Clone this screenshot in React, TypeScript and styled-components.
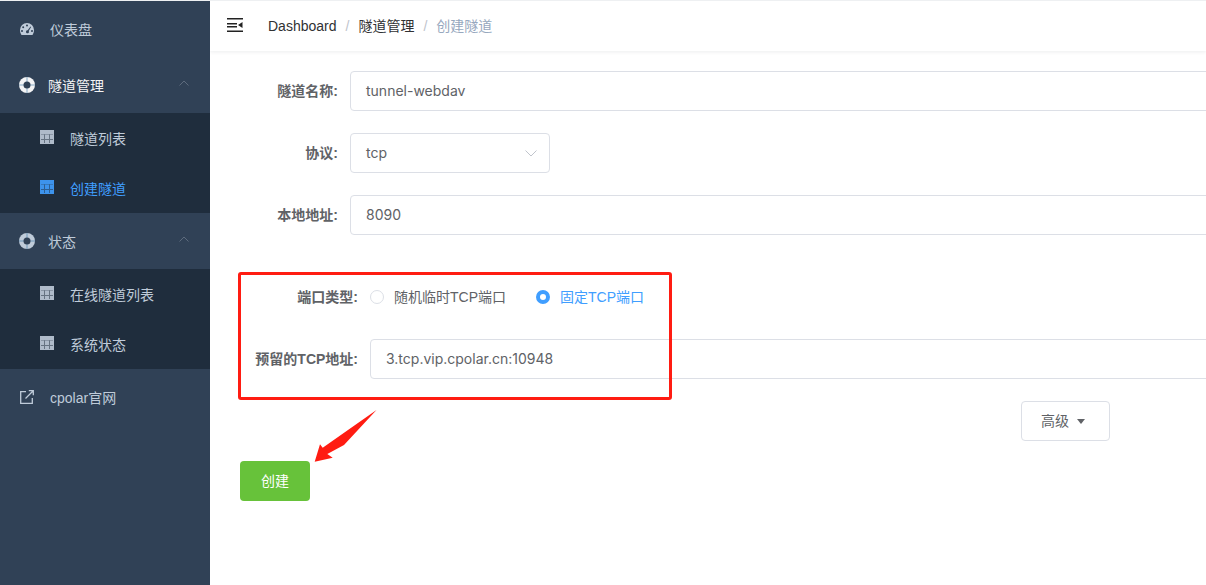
import React from 'react';
import styled, { createGlobalStyle } from 'styled-components';

const GlobalStyle = createGlobalStyle`
  html, body {
    margin: 0;
    height: 100%;
    overflow: hidden;
    background: #fff;
    font-family: 'Liberation Sans', 'Noto Sans CJK SC', sans-serif;
    font-size: 14px;
  }
  #root { height: 100%; }
`;

const GaugeIcon = () => (
  <svg width="16" height="14" viewBox="0 0 16 14">
    <path
      fill="currentColor"
      fillRule="evenodd"
      d="M8 1a7 7 0 0 1 7 7c0 2-.6 3.400-1.500 5h-11C1.600 11.400 1 10 1 8a7 7 0 0 1 7-7zM8 2.500a1 1 0 1 0 0 2 1 1 0 0 0 0-2zM4.200 4.200a1 1 0 1 0 0 2 1 1 0 0 0 0-2zM3 8a1 1 0 1 0 0 2 1 1 0 0 0 0-2zM13 8a1 1 0 1 0 0 2 1 1 0 0 0 0-2zM11.500 4.500 8.700 8.300a1.500 1.500 0 1 0 1 .6l2.400-4z"
    />
  </svg>
);

const RingIcon = () => (
  <svg width="16" height="16" viewBox="0 0 16 16">
    <circle cx="8" cy="8" r="8" fill="currentColor" />
    <path d="M8 0v16M0 8h16" stroke="#2f6f9f" strokeWidth="1" opacity="0.55" />
    <circle cx="8" cy="8" r="3.500" fill="#304156" />
  </svg>
);

const GridIcon = () => (
  <svg width="14" height="14" viewBox="0 0 14 14">
    <rect width="14" height="14" fill="currentColor" opacity="0.9" />
    <path d="M4.500 4.500V13M9.500 4.500V13M1 9.500h12" stroke="#1f2d3d" strokeWidth="1" opacity="0.5" />
    <path d="M1 4.500h12" stroke="#1f2d3d" strokeWidth="1" opacity="0.25" />
  </svg>
);

const LinkIcon = () => (
  <svg width="15" height="14" viewBox="-1 0 15 14" fill="none" stroke="currentColor" strokeWidth="1.300">
    <path d="M6 1.700H.7v11.600h11.600V8" />
    <path d="M5.500 8.500 13 1M8.800.700h4.500v4.500" />
  </svg>
);

const Chevron = () => (
  <svg width="10" height="6" viewBox="0 0 10 6" fill="none" stroke="currentColor" strokeWidth="1">
    <path d="M.5 5.500 5 1l4.500 4.500" />
  </svg>
);

const MenuFoldIcon = () => (
  <svg width="16" height="14" viewBox="0 0 16 14" fill="#222">
    <path d="M0 0h16v1.500H0zM0 5h10v1.500H0zM0 8h10v1.500H0zM0 12.500h16V14H0zM15.500 4v6L11 7z" />
  </svg>
);

const Page = styled.div`
  display: flex;
  height: 585px;
  box-sizing: border-box;
  border-top: 1px solid #eef0f2;
`;

const Sidebar = styled.nav`
  width: 210px;
  flex: none;
  background: #304156;
  color: #bfcbd9;
`;

const MenuRow = styled.div<{ $open?: boolean; $lead: number }>`
  height: 56px;
  display: flex;
  align-items: center;
  padding: 0 21px 0 19px;
  box-sizing: border-box;
  color: ${(p) => (p.$open ? '#f4f4f5' : '#bfcbd9')};
  > svg:first-child {
    flex: none;
    margin-right: ${(p) => p.$lead}px;
  }
`;

const RowArrow = styled.span`
  margin-left: auto;
  display: flex;
  color: #5d6b7d;
  margin-top: -4px;
`;

const SubMenu = styled.div`
  background: #1f2d3d;
`;

const SubRow = styled.div<{ $active?: boolean }>`
  height: 50px;
  display: flex;
  align-items: center;
  gap: 16px;
  padding: 0 0 0 40px;
  color: ${(p) => (p.$active ? '#409eff' : '#bfcbd9')};
  svg {
    margin-top: -2px;
  }
`;

const Main = styled.main`
  flex: 1;
  min-width: 0;
  overflow: hidden;
  position: relative;
`;

const Navbar = styled.header`
  height: 50px;
  display: flex;
  align-items: center;
  padding-left: 17px;
  background: #fff;
  box-shadow: 0 1px 4px rgba(0, 21, 41, 0.08);
  > svg {
    margin-top: -2px;
  }
`;

const Crumbs = styled.div`
  margin-left: 25px;
  display: flex;
  align-items: center;
  line-height: 20px;
  color: #303133;
`;

const CrumbSep = styled.span`
  margin: 0 9px;
  color: #c0c4cc;
`;

const CrumbLast = styled.span`
  color: #97a8be;
`;

const Form = styled.form`
  width: 1100px;
  padding: 20px 0 0 28px;
`;

const FormItem = styled.div<{ $gap?: number }>`
  display: flex;
  min-height: 40px;
  margin-bottom: ${(p) => p.$gap ?? 22}px;
`;

const Label = styled.label<{ $width: number }>`
  width: ${(p) => p.$width}px;
  flex: none;
  box-sizing: border-box;
  padding-right: 12px;
  text-align: right;
  line-height: 40px;
  font-weight: 700;
  color: #606266;
`;

const TextInput = styled.div`
  flex: 1;
  height: 40px;
  box-sizing: border-box;
  padding: 0 15px;
  border: 1px solid #dcdfe6;
  border-radius: 4px;
  font-family: Inter, 'Liberation Sans', sans-serif;
  line-height: 38px;
  color: #606266;
`;

const SelectBox = styled(TextInput)`
  flex: none;
  width: 200px;
  display: flex;
  align-items: center;
  justify-content: space-between;
  padding-right: 12px;
`;

const RadioGroup = styled.div`
  display: flex;
  align-items: center;
  gap: 30px;
`;

const Radio = styled.div<{ $checked?: boolean }>`
  display: flex;
  align-items: center;
  gap: 10px;
  color: ${(p) => (p.$checked ? '#409eff' : '#606266')};
`;

const RadioText = styled.span`
  margin-top: -2px;
`;

const RadioDot = styled.span<{ $checked?: boolean }>`
  width: 14px;
  height: 14px;
  box-sizing: border-box;
  border-radius: 50%;
  border: ${(p) => (p.$checked ? '4px solid #409eff' : '1px solid #dcdfe6')};
  background: #fff;
`;

const AdvancedRow = styled.div`
  width: 872px;
  display: flex;
  justify-content: flex-end;
  margin-bottom: 20px;
`;

const AdvancedButton = styled.button`
  width: 89px;
  height: 40px;
  display: flex;
  align-items: center;
  justify-content: center;
  gap: 8px;
  padding: 0 5px 2px 0;
  font: inherit;
  color: #606266;
  background: #fff;
  border: 1px solid #dcdfe6;
  border-radius: 4px;
`;

const CaretDown = styled.span`
  width: 0;
  height: 0;
  margin-top: 2px;
  border-left: 4.5px solid transparent;
  border-right: 4.5px solid transparent;
  border-top: 5px solid #606266;
`;

const SubmitButton = styled.button`
  width: 70px;
  height: 40px;
  margin-left: 2px;
  padding: 0 0 2px;
  font: inherit;
  color: #fff;
  background: #67c23a;
  border: 0;
  border-radius: 4px;
`;

const Highlight = styled.div`
  position: absolute;
  left: 28px;
  top: 271px;
  width: 434px;
  height: 128px;
  box-sizing: border-box;
  border: 3px solid #ff1c12;
  border-radius: 3px;
`;

const ArrowMark = styled.svg`
  position: absolute;
  left: 100px;
  top: 404px;
`;

const Stroke = () => (
  <ArrowMark width="70" height="60" viewBox="0 0 70 60">
    <path fill="#ff1c12" d="M66.500 5 12.700 42.700 10 39.300 4.700 56.700 22.700 52.700 17.300 49 34 40z" />
  </ArrowMark>
);

export default function App() {
  return (
    <Page>
      <GlobalStyle />
      <Sidebar>
        <MenuRow $lead={15}>
          <GaugeIcon />
          仪表盘
        </MenuRow>
        <MenuRow $open $lead={13}>
          <RingIcon />
          隧道管理
          <RowArrow>
            <Chevron />
          </RowArrow>
        </MenuRow>
        <SubMenu>
          <SubRow>
            <GridIcon />
            隧道列表
          </SubRow>
          <SubRow $active>
            <GridIcon />
            创建隧道
          </SubRow>
        </SubMenu>
        <MenuRow $lead={13}>
          <RingIcon />
          状态
          <RowArrow>
            <Chevron />
          </RowArrow>
        </MenuRow>
        <SubMenu>
          <SubRow>
            <GridIcon />
            在线隧道列表
          </SubRow>
          <SubRow>
            <GridIcon />
            系统状态
          </SubRow>
        </SubMenu>
        <MenuRow $lead={16}>
          <LinkIcon />
          cpolar官网
        </MenuRow>
      </Sidebar>
      <Main>
        <Navbar>
          <MenuFoldIcon />
          <Crumbs>
            <span>Dashboard</span>
            <CrumbSep>/</CrumbSep>
            <span>隧道管理</span>
            <CrumbSep>/</CrumbSep>
            <CrumbLast>创建隧道</CrumbLast>
          </Crumbs>
        </Navbar>
        <Form>
          <FormItem>
            <Label $width={112}>隧道名称:</Label>
            <TextInput>tunnel-webdav</TextInput>
          </FormItem>
          <FormItem>
            <Label $width={112}>协议:</Label>
            <SelectBox>
              tcp
              <svg width="12" height="7" viewBox="0 0 12 7" fill="none" stroke="#c0c4cc">
                <path d="M.5.500 6 6l5.500-5.500" />
              </svg>
            </SelectBox>
          </FormItem>
          <FormItem $gap={42}>
            <Label $width={112}>本地地址:</Label>
            <TextInput>8090</TextInput>
          </FormItem>
          <FormItem>
            <Label $width={132}>端口类型:</Label>
            <RadioGroup>
              <Radio>
                <RadioDot />
                <RadioText>随机临时TCP端口</RadioText>
              </Radio>
              <Radio $checked>
                <RadioDot $checked />
                <RadioText>固定TCP端口</RadioText>
              </Radio>
            </RadioGroup>
          </FormItem>
          <FormItem>
            <Label $width={132}>预留的TCP地址:</Label>
            <TextInput>3.tcp.vip.cpolar.cn:10948</TextInput>
          </FormItem>
          <AdvancedRow>
            <AdvancedButton type="button">
              高级
              <CaretDown />
            </AdvancedButton>
          </AdvancedRow>
          <SubmitButton type="button">创建</SubmitButton>
        </Form>
        <Highlight />
        <Stroke />
      </Main>
    </Page>
  );
}
